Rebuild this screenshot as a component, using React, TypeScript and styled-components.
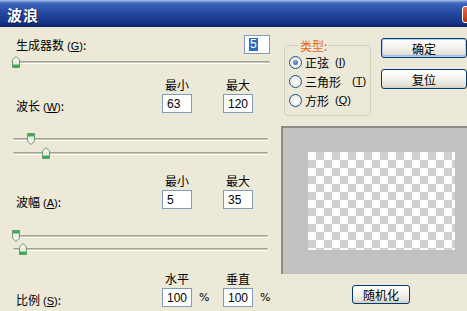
import React from 'react'
import styled, { createGlobalStyle } from 'styled-components'

const GlobalStyle = createGlobalStyle`
  html, body {
    margin: 0;
    padding: 0;
    background: #ece9d8;
    overflow: hidden;
  }
`

const Window = styled.div`
  width: 467px;
  height: 311px;
  display: flex;
  flex-direction: column;
  overflow: hidden;
  background: #ece9d8;
  font-family: "Noto Sans CJK SC", "Liberation Sans", sans-serif;
  font-size: 12px;
  color: #000;
`

const TitleBar = styled.div`
  height: 27px;
  flex: none;
  display: flex;
  align-items: center;
  justify-content: space-between;
  padding-left: 7px;
  background: linear-gradient(#7d9bd6 0%, #3a63bd 10%, #24499f 45%, #18378a 80%, #0b2467 100%);
  border-top: 1px solid #9db3e4;
  box-sizing: border-box;
`

const Title = styled.span`
  color: #fff;
  font-weight: bold;
  font-size: 15px;
  letter-spacing: 1px;
  text-shadow: 1px 1px 0 #0a1a50;
`

const CloseButton = styled.div`
  width: 21px;
  height: 15px;
  margin-right: -18px;
  margin-top: 1px;
  border: 1px solid #fff;
  border-radius: 3px;
  background: linear-gradient(#e8674a, #c2350f);
`

const Body = styled.div`
  flex: 1;
  display: flex;
  overflow: hidden;
`

const LeftPane = styled.div`
  width: 280px;
  flex: none;
  display: flex;
  flex-direction: column;
`

const RightPane = styled.div`
  flex: 1;
  display: flex;
  flex-direction: column;
  min-width: 0;
`

const GenRow = styled.div`
  display: flex;
  align-items: center;
  justify-content: space-between;
  margin-top: 8px;
  padding: 0 10px 0 16px;
  height: 18px;
`

const Label = styled.span`
  white-space: nowrap;
  font-size: 12px;
`

const Mn = styled.span<{ $gap?: number }>`
  font-family: "Liberation Sans", sans-serif;
  font-size: 11px;
  margin-left: ${p => p.$gap ?? 3}px;
`

const TextBox = styled.div<{ $w?: number; $selected?: boolean }>`
  width: ${p => p.$w ?? 30}px;
  height: 19px;
  box-sizing: border-box;
  border: 1px solid #7f9db9;
  background: #fff;
  display: flex;
  align-items: center;
  padding-left: 4px;
  font-family: "Liberation Sans", sans-serif;
  font-size: 12px;
  span {
    background: ${p => (p.$selected ? '#316ac5' : 'transparent')};
    color: ${p => (p.$selected ? '#fff' : '#000')};
    line-height: 13px;
    padding: 0 1px;
  }
`

const ParamGrid = styled.div<{ $top: number }>`
  display: grid;
  grid-template-columns: 146px 61px 50px;
  grid-template-rows: 14px 19px;
  row-gap: 2px;
  margin-top: ${p => p.$top}px;
  padding-left: 16px;
  align-items: center;
`

const ColHead = styled.span`
  padding-left: 3px;
  font-size: 12px;
  line-height: 14px;
`

const RowLabel = styled(Label)`
  grid-column: 1;
  grid-row: 2;
  align-self: end;
  transform: translateY(1px);
`

const InputCell = styled.div`
  display: flex;
  align-items: center;
  gap: 7px;
`

const Percent = styled.span`
  font-size: 11px;
  font-family: "DejaVu Sans", sans-serif;
`

const SliderWrap = styled.div<{ $top: number; $left: number; $right: number }>`
  position: relative;
  height: 12px;
  margin: ${p => p.$top}px ${p => p.$right}px 0 ${p => p.$left}px;
  display: flex;
  align-items: center;
`

const Track = styled.div`
  flex: 1;
  height: 1px;
  border-top: 1px solid #a3a190;
  border-bottom: 1px solid #fff;
  border-radius: 2px;
  background: #c9c6b5;
`

const Thumb = styled.svg`
  position: absolute;
  top: 0;
  width: 8px;
  height: 12px;
`

const ThumbIcon: React.FC<{ x: number; down?: boolean }> = ({ x, down }) => (
  <Thumb viewBox="0 0 8 12" style={{ left: x - 4, transform: down ? 'scaleY(-1)' : undefined }}>
    <polygon points="4,0.5 7.5,4 7.5,11.5 0.5,11.5 0.5,4" fill="#f4f4ee" stroke="#6f9472" strokeWidth="1" />
    <rect x="1" y="8.5" width="6" height="2.5" fill="#2fb34a" />
    <rect x="1" y="5" width="6" height="3" fill="#e6eee2" />
  </Thumb>
)

const Slider: React.FC<{ top: number; left: number; right: number; thumb: number; down?: boolean }> = ({
  top,
  left,
  right,
  thumb,
  down,
}) => (
  <SliderWrap $top={top} $left={left} $right={right}>
    <Track />
    <ThumbIcon x={thumb} down={down} />
  </SliderWrap>
)

const TopRow = styled.div`
  display: flex;
  align-items: flex-start;
  gap: 10px;
  padding-left: 4px;
  height: 99px;
`

const GroupBox = styled.fieldset`
  margin: 12px 0 0 0;
  width: 89px;
  height: 77px;
  box-sizing: border-box;
  border: 1px solid #d0d0bf;
  border-radius: 4px;
  padding: 3px 0 0 4px;
  display: flex;
  flex-direction: column;
  gap: 5px;
`

const Legend = styled.legend`
  color: #e2661c;
  padding: 0 1px;
  margin-left: 10px;
  font-size: 12px;
  line-height: 13px;
`

const RadioRow = styled.div`
  display: flex;
  align-items: center;
  gap: 3px;
  height: 14px;
  white-space: nowrap;
`

const RadioCircle = styled.span<{ $on?: boolean }>`
  width: 11px;
  height: 11px;
  border-radius: 50%;
  border: 1px solid #1c5180;
  background: radial-gradient(circle at 60% 65%, #fff 0%, #e2e0d6 100%);
  display: flex;
  align-items: center;
  justify-content: center;
  &::after {
    content: '';
    width: 5px;
    height: 5px;
    border-radius: 50%;
    background: ${p => (p.$on ? 'radial-gradient(circle at 35% 35%, #8aa6e6, #2b56b8)' : 'transparent')};
  }
`

const ButtonCol = styled.div`
  display: flex;
  flex-direction: column;
  gap: 11px;
  margin-top: 11px;
`

const XPButton = styled.div<{ $default?: boolean; $w: number }>`
  width: ${p => p.$w}px;
  height: 20px;
  box-sizing: border-box;
  flex: none;
  border: 1px solid #003c74;
  border-radius: 3px;
  background: linear-gradient(#ffffff 0%, #f4f3ee 45%, #e3e1d6 85%, #cfcabd 100%);
  box-shadow: ${p =>
    p.$default ? 'inset 0 0 0 1px #b9cdf3, inset 0 -1px 0 1px #a3bbec' : 'inset 0 -1px 0 #d6d0c5'};
  display: flex;
  align-items: center;
  justify-content: center;
  font-size: 12px;
`

const Preview = styled.div`
  margin: 0 0 0 1px;
  height: 148px;
  box-sizing: border-box;
  border-top: 2px solid #8c8b85;
  border-left: 2px solid #8c8b85;
  background: #c2c1c0;
  padding: 24px 0 0 25px;
`

const Checker = styled.div`
  width: 147px;
  height: 98px;
  background-color: #fdfdfd;
  background-image: conic-gradient(#d0d0d0 0 25%, transparent 0 50%, #d0d0d0 0 75%, transparent 0);
  background-size: 16px 16px;
`

const RandomRow = styled.div`
  margin: 11px 0 0 72px;
`

const App: React.FC = () => {
  return (
    <Window>
      <GlobalStyle />
      <TitleBar>
        <Title>波浪</Title>
        <CloseButton />
      </TitleBar>
      <Body>
        <LeftPane>
          <GenRow>
            <Label>
              生成器数<Mn>(<u>G</u>)</Mn>:
            </Label>
            <TextBox $w={26} $selected>
              <span>5</span>
            </TextBox>
          </GenRow>
          <Slider top={3} left={16} right={10} thumb={0} />

          <ParamGrid $top={10}>
            <span />
            <ColHead>最小</ColHead>
            <ColHead>最大</ColHead>
            <RowLabel>
              波长<Mn>(<u>W</u>)</Mn>:
            </RowLabel>
            <TextBox>63</TextBox>
            <TextBox>120</TextBox>
          </ParamGrid>
          <Slider top={20} left={13} right={12} thumb={18} down />
          <Slider top={2} left={13} right={12} thumb={33} />

          <ParamGrid $top={15}>
            <span />
            <ColHead>最小</ColHead>
            <ColHead>最大</ColHead>
            <RowLabel>
              波幅<Mn>(<u>A</u>)</Mn>:
            </RowLabel>
            <TextBox>5</TextBox>
            <TextBox>35</TextBox>
          </ParamGrid>
          <Slider top={21} left={13} right={12} thumb={3} down />
          <Slider top={1} left={13} right={12} thumb={10} />

          <ParamGrid $top={17}>
            <span />
            <ColHead>水平</ColHead>
            <ColHead>垂直</ColHead>
            <RowLabel>
              比例<Mn>(<u>S</u>)</Mn>:
            </RowLabel>
            <InputCell>
              <TextBox>100</TextBox>
              <Percent>%</Percent>
            </InputCell>
            <InputCell>
              <TextBox>100</TextBox>
              <Percent>%</Percent>
            </InputCell>
          </ParamGrid>
        </LeftPane>

        <RightPane>
          <TopRow>
            <GroupBox>
              <Legend>类型:</Legend>
              <RadioRow>
                <RadioCircle $on />
                正弦<Mn>(<u>I</u>)</Mn>
              </RadioRow>
              <RadioRow>
                <RadioCircle />
                三角形<Mn $gap={8}>(<u>T</u>)</Mn>
              </RadioRow>
              <RadioRow>
                <RadioCircle />
                方形<Mn>(<u>Q</u>)</Mn>
              </RadioRow>
            </GroupBox>
            <ButtonCol>
              <XPButton $default $w={86}>确定</XPButton>
              <XPButton $w={86}>复位</XPButton>
            </ButtonCol>
          </TopRow>
          <Preview>
            <Checker />
          </Preview>
          <RandomRow>
            <XPButton $w={58} style={{ height: 19 }}>随机化</XPButton>
          </RandomRow>
        </RightPane>
      </Body>
    </Window>
  )
}

export default App
